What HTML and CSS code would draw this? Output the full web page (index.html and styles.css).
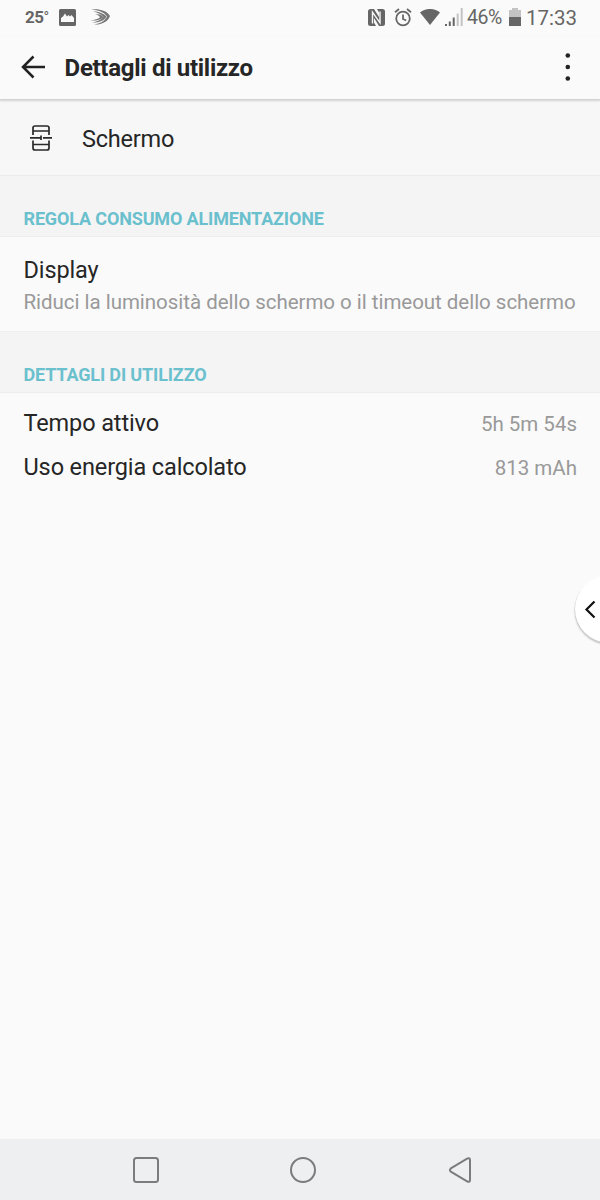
FILE: index.html
```
<!DOCTYPE html>
<html lang="it">
  <head>
    <meta charset="UTF-8" />
    <meta name="viewport" content="width=device-width, initial-scale=1.0" />
    <title>Dettagli di utilizzo</title>
    <link rel="stylesheet" href="styles.css">
  </head>
  <body>
    <div class="statusbar">
      <span class="temp">25<small>°</small></span>
      <svg class="photo" width="17" height="17" viewBox="0 0 17 17">
        <path fill="#666" fill-rule="evenodd" d="M1.5 0h14Q17 0 17 1.5v14q0 1.5-1.5 1.5h-14Q0 17 0 15.5v-14Q0 0 1.5 0zM2 13h13V9l-2.500-3-1.500 1.500-1.500-1.500L8 7.500 6 4.500 4 7.500 2 9z" />
      </svg>
      <svg class="swift" width="20" height="16" viewBox="0 0 20 16" fill="#777">
        <path d="M1 .5C9-.5 17 1.500 20 7c-2 6-9 9-16 8.500 6-.8 11-3.500 13-8C14 3 8 1 1 .5z" />
        <path d="M3 2.500c6 0 11 2 13.500 5.200-3 4.300-8 6-14.500 5.800 5-.8 9-2.500 11.500-5.500C11 5 7 3.200 3 2.500z" />
        <path d="M5 5c4 0 7 1.200 8.500 3.200-3 2.800-8 3.800-13.500 3.300 5-.5 8-1.500 10-3.200C9 6.500 7 5.500 5 5z" />
      </svg>
      <div class="status-right">
        <svg class="nfc" width="17" height="17" viewBox="0 0 17 17">
          <path d="M2.500 0H6l5 8V3.500L9 0h5.500Q17 0 17 2.500v12q0 2.500-2.500 2.500H11L6 9v4.500L8 17H2.500Q0 17 0 14.500v-12Q0 0 2.500 0z" fill="#666" />
          <path d="M4.500 14.500V3.200l7.500 10.600V2.500" fill="none" stroke="#fafafa" stroke-width="1.400" />
        </svg>
        <svg class="alarm" width="18" height="19" viewBox="0 0 18 19" fill="none" stroke="#666" stroke-width="1.800">
          <circle cx="9" cy="10.500" r="6.800" />
          <path d="M1 4.200l4-3.200M17 4.200l-4-3.200M9 6.500v4.500l3.200 1.500" />
        </svg>
        <svg class="wifi" width="20" height="16" viewBox="0 0 20 16">
          <path d="M0 3.500C6-1.200 14-1.200 20 3.500L10 16z" fill="#666" />
        </svg>
        <svg class="signal" width="18" height="18" viewBox="0 0 18 18">
          <path d="M0 16h2v2H0zM3.800 13.500h2V18h-2zM7.700 9.500h2V18h-2z" fill="#666" />
          <path d="M11.700 5.500h2V18h-2zM15.700 0h2v18h-2z" fill="#c3c3c3" />
        </svg>
        <span class="percent">46%</span>
        <svg class="battery" width="12" height="18" viewBox="0 0 12 18">
          <path d="M0 2h3V0h6v2h3v7H0z" fill="#c3c3c3" />
          <path d="M0 9h12v9H0z" fill="#666" />
        </svg>
        <span class="clock">17:33</span>
      </div>
    </div>

    <header class="toolbar">
      <svg class="back" width="25" height="24" viewBox="0 0 25 24" fill="none" stroke="#222" stroke-width="2.500">
        <path d="M24 12H2M12.500 1.500L2 12l10.500 10.500" />
      </svg>
      <h1>Dettagli di utilizzo</h1>
      <svg class="more" width="6" height="28" viewBox="0 0 6 28" fill="#222">
        <circle cx="2.800" cy="2.500" r="2.300" />
        <circle cx="2.800" cy="14" r="2.300" />
        <circle cx="2.800" cy="25.500" r="2.300" />
      </svg>
    </header>

    <main>
      <div class="app">
        <svg width="22" height="26" viewBox="0 0 22 26" fill="none" stroke="#2a2a2a" stroke-width="1.700">
          <path d="M3 10V3q0-2 2-2h12q2 0 2 2v7M3 15.500V23q0 2 2 2h12q2 0 2-2v-7.500M3 6h16M3 19.500h16" />
          <path d="M0 12.800h11M13 12.800h9M11 10.500v4.600" />
        </svg>
        <span>Schermo</span>
      </div>

      <h2>Regola consumo alimentazione</h2>
      <div class="item">
        <div class="label">Display</div>
        <div class="summary">Riduci la luminosità dello schermo o il timeout dello schermo</div>
      </div>

      <h2>Dettagli di utilizzo</h2>
      <div class="details">
        <div class="row">
          <span class="label">Tempo attivo</span>
          <span class="value">5h 5m 54s</span>
        </div>
        <div class="row">
          <span class="label">Uso energia calcolato</span>
          <span class="value">813 mAh</span>
        </div>
      </div>
    </main>

    <svg class="handle" width="30" height="76" viewBox="0 0 30 76">
      <circle cx="38" cy="38" r="34.500" fill="#eee" />
      <circle cx="38.500" cy="37.500" r="34" fill="#ccc" />
      <circle cx="38.500" cy="36" r="33.500" fill="#fff" />
      <path d="M24.500 28.500L16.500 36.500l8 8" fill="none" stroke="#111" stroke-width="2.200" />
    </svg>

    <nav class="navbar">
      <svg width="26" height="26" viewBox="0 0 26 26">
        <rect x="1" y="1" width="24" height="24" rx="2.500" />
      </svg>
      <svg width="26" height="26" viewBox="0 0 26 26">
        <circle cx="13" cy="13" r="12" />
      </svg>
      <svg width="26" height="26" viewBox="0 0 26 26">
        <path d="M3.800 11.400L20.500 1.500q2.500-1 2.500 1.500v20q0 2.500-2.500 1.500L3.800 14.600q-1.800-1.600 0-3.200z" />
      </svg>
    </nav>
  </body>
</html>
```

FILE: styles.css
```
* {
  box-sizing: border-box;
}
body {
  margin: 0;
  height: 1200px;
  display: flex;
  flex-direction: column;
  font-family: Roboto, sans-serif;
  background: #fafafa;
  color: #262626;
  position: relative;
}
h1,
h2 {
  margin: 0;
}
svg {
  flex: none;
}
.statusbar {
  display: flex;
  align-items: center;
  height: 36px;
  padding: 0 23px 2px 25px;
  color: #666;
}
.temp {
  width: 34px;
  font-size: 17px;
  font-weight: 700;
  letter-spacing: -0.5px;
  white-space: nowrap;
}
.temp small {
  font-size: 15px;
  font-weight: 400;
  vertical-align: 1px;
}
.swift {
  margin-left: 14px;
}
.status-right {
  display: flex;
  align-items: center;
  margin-left: auto;
}
.alarm {
  margin-left: 9px;
}
.wifi {
  margin-left: 8px;
}
.signal {
  margin-left: 5px;
}
.percent {
  width: 36px;
  margin-left: 4px;
  padding-top: 1px;
  font-size: 19.5px;
  letter-spacing: -0.4px;
}
.battery {
  margin-left: 6px;
}
.clock {
  margin-left: 5px;
  padding-top: 2px;
  font-size: 20.5px;
}
.toolbar {
  display: flex;
  align-items: center;
  height: 64px;
  padding: 0 29px 2px 21px;
  border-bottom: 1px solid #d2d2d2;
  box-shadow: 0 1px 2px rgba(0, 0, 0, 0.15);
  position: relative;
}
.toolbar h1 {
  margin-left: 18.6px;
  padding-top: 3px;
  font-size: 24px;
  font-weight: 700;
  letter-spacing: -0.3px;
  white-space: nowrap;
}
.more {
  margin-left: auto;
}
main {
  flex: 1;
}
.app {
  display: flex;
  align-items: center;
  gap: 30px;
  height: 76px;
  padding: 0 30px;
  background: #f7f7f7;
  border-bottom: 1px solid #ebebeb;
  font-size: 23.5px;
  letter-spacing: -0.2px;
}
.app span {
  padding-top: 2px;
}
h2 {
  display: flex;
  align-items: flex-end;
  height: 61px;
  padding: 0 23.5px 7px;
  background: #f4f4f4;
  border-bottom: 1px solid #ededed;
  color: #6bc0ce;
  font-size: 18px;
  line-height: 21px;
  letter-spacing: -0.15px;
  text-transform: uppercase;
}
.item {
  height: 95px;
  padding: 19px 23.5px 0;
  border-bottom: 1px solid #eee;
  white-space: nowrap;
}
.label {
  font-size: 23.5px;
  line-height: 28px;
  letter-spacing: -0.12px;
}
.summary {
  margin-top: 5px;
  font-size: 20.5px;
  line-height: 26px;
  letter-spacing: -0.03px;
  color: #999;
}
.details {
  padding: 8px 23px 0 23.5px;
}
.row {
  display: flex;
  align-items: center;
  justify-content: space-between;
  height: 44px;
}
.value {
  padding-top: 2px;
  font-size: 20.5px;
  color: #999;
}
/* edge handle lies over the page */
.handle {
  position: absolute;
  top: 573px;
  right: 0;
}
.navbar {
  display: flex;
  align-items: center;
  justify-content: space-between;
  height: 61px;
  padding: 0 127px 0 133px;
  background: #edeff1;
}
.navbar svg {
  fill: none;
  stroke: #7c7c7c;
  stroke-width: 2;
}
```
